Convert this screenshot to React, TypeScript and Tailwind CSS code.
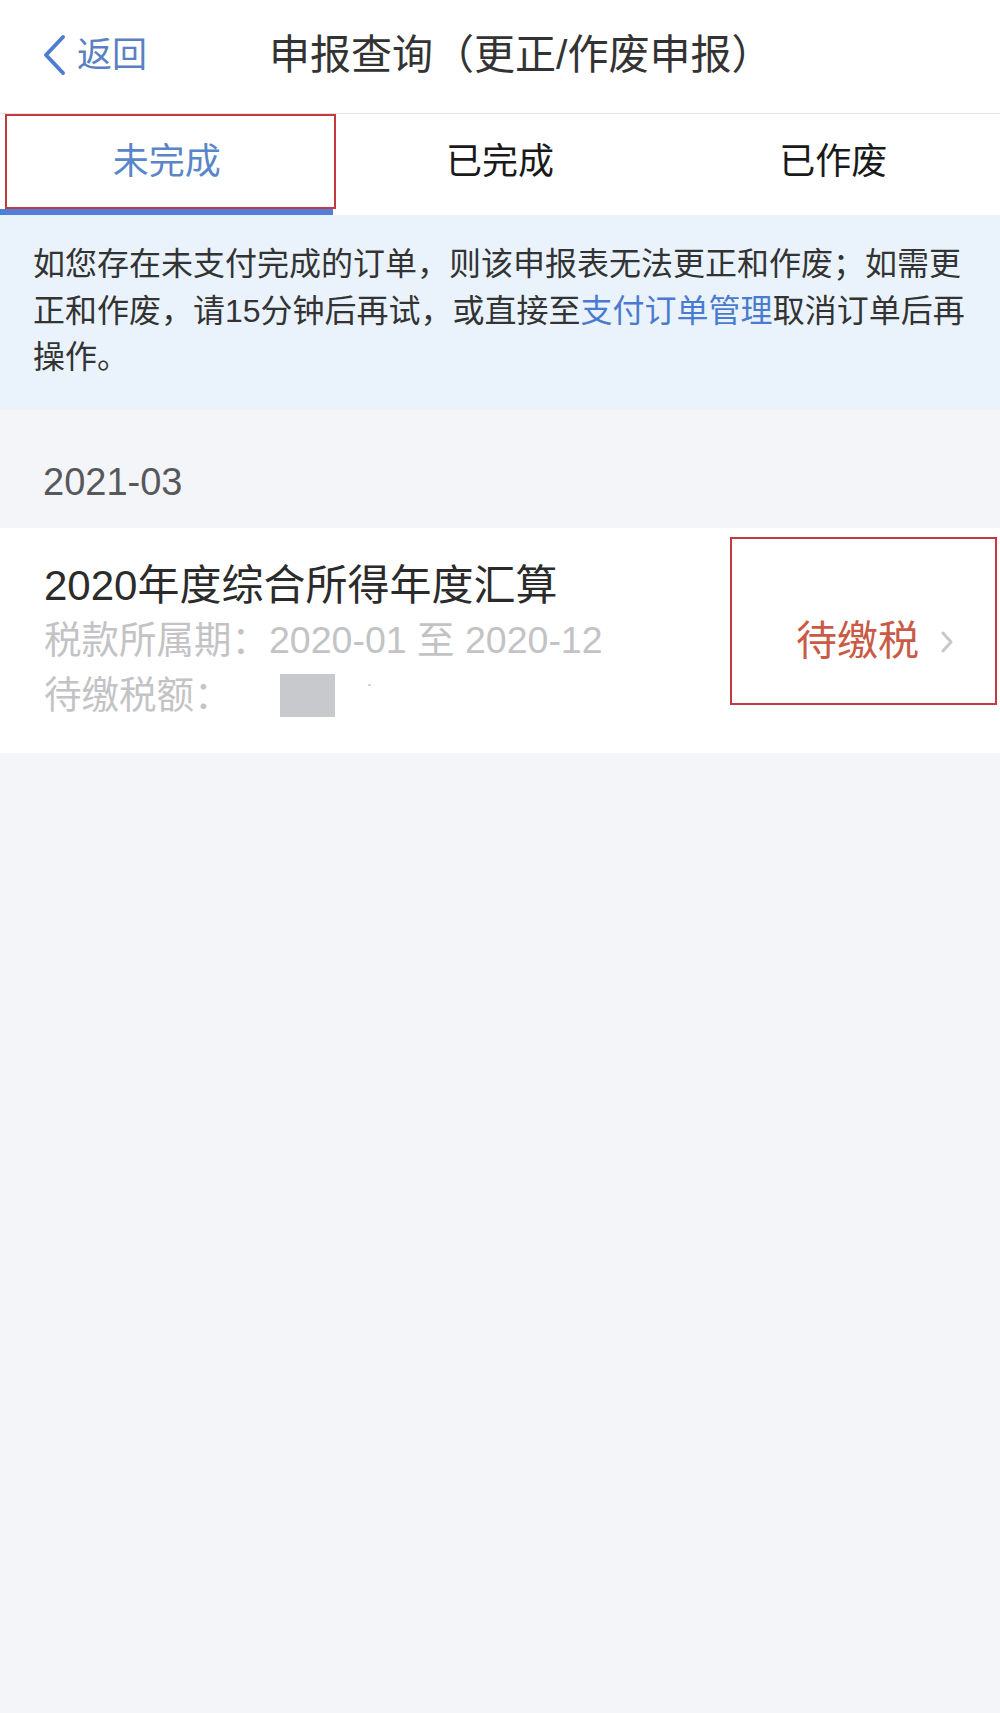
import React from "react";

const FONT = { fontFamily: '"Liberation Sans", "Noto Sans CJK SC", sans-serif' };

export default function App() {
  return (
    <div className="w-[1000px] min-h-[1713px] bg-[#f3f5f9] flex flex-col" style={FONT}>
      {/* Header */}
      <div className="h-[113px] bg-white flex items-center pl-[42px] pb-[4px]">
        <div className="flex items-center">
          <svg width="24" height="42" viewBox="0 0 24 42" fill="none">
            <path d="M21 3 L4 21 L21 39" stroke="#4f7bd0" strokeWidth="4" strokeLinecap="round" strokeLinejoin="round" />
          </svg>
          <span className="ml-[11px] text-[35px] leading-[40px] text-[#5a80c4]">返回</span>
        </div>
        <div className="ml-[122px] text-[41px] leading-[46px] text-[#333333]">申报查询（更正/作废申报）</div>
      </div>

      {/* Tabs */}
      <div className="bg-white border-t border-[#e4e4e6] grid grid-cols-3">
        <div className="relative h-[101px] flex flex-col">
          <div className="flex-1 flex items-center justify-center text-[36px] text-[#5a85c9]">未完成</div>
          <div className="h-[6px] bg-[#4f7fd8]" />
          <div className="absolute left-[5px] top-0 w-[331px] h-[95px] border-2 border-[#c3393e]" />
        </div>
        <div className="h-[101px] flex items-center justify-center pb-[6px] text-[36px] text-[#1a1a1a]">已完成</div>
        <div className="h-[101px] flex items-center justify-center pb-[6px] text-[36px] text-[#1a1a1a]">已作废</div>
      </div>

      {/* Notice */}
      <div className="bg-[#eaf3fc] pl-[33px] pr-[28px] pt-[26px] pb-[29px] text-[32px] leading-[46.5px] text-[#333333]">
        <p>
          如您存在未支付完成的订单，则该申报表无法更正和作废；如需更正和作废，请15分钟后再试，或直接至<span className="text-[#4a7bd0]">支付订单管理</span>取消订单后再操作。
        </p>
      </div>

      {/* Date */}
      <div className="h-[118px] flex items-center pl-[43px] pt-[28px] text-[38px] text-[#57585c]">2021-03</div>

      {/* Card */}
      <div className="relative bg-white h-[225px] flex items-stretch justify-between">
        <div className="pl-[44px] pt-[30px]">
          <div className="text-[42px] leading-[55px] text-[#2b2b2b]">2020年度综合所得年度汇算</div>
          <div className="text-[37.5px] leading-[55px] text-[#c3c3c6]">税款所属期：2020-01 至 2020-12</div>
          <div className="flex items-center h-[55px] text-[37.5px] text-[#c3c3c6]">
            <span>待缴税额：</span>
            <span className="ml-[48px] w-[55px] h-[43px] bg-[#c8c9cd]" />
            <span className="ml-[33px] mb-[20px] w-[3px] h-[2px] bg-[#d5d5d8]" />
          </div>
        </div>
        <div className="flex items-center pr-[47px] pt-[4px]">
          <span className="text-[41px] text-[#c95a45]">待缴税</span>
          <svg className="ml-[22px]" width="12" height="22" viewBox="0 0 12 22" fill="none">
            <path d="M2 2 L10 11 L2 20" stroke="#c8c8cc" strokeWidth="3" strokeLinecap="round" strokeLinejoin="round" />
          </svg>
        </div>
        <div className="absolute left-[730px] top-[9px] w-[267px] h-[168px] border-2 border-[#c3393e]" />
      </div>
    </div>
  );
}
